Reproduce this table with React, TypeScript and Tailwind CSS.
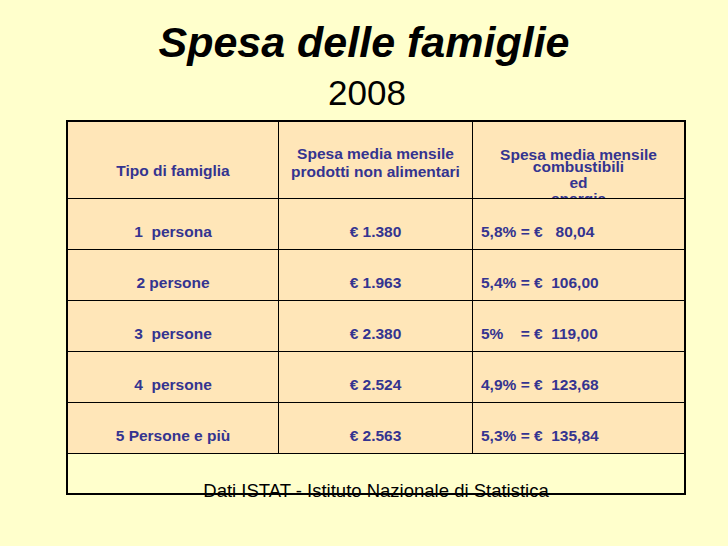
import React from "react";

// ── Data ───────────────────────────────────────────────────

const rows: { tipo: string; spesa: string; energia: string }[] = [
  { tipo: "1  persona", spesa: "€ 1.380", energia: "5,8% = €   80,04" },
  { tipo: "2 persone", spesa: "€ 1.963", energia: "5,4% = €  106,00" },
  { tipo: "3  persone", spesa: "€ 2.380", energia: "5%    = €  119,00" },
  { tipo: "4  persone", spesa: "€ 2.524", energia: "4,9% = €  123,68" },
  { tipo: "5 Persone e più", spesa: "€ 2.563", energia: "5,3% = €  135,84" },
];

// ── Table ──────────────────────────────────────────────────

function HeaderRow() {
  return (
    <div className="grid h-[77px] grid-cols-[211px_194px_1fr] border-b border-black bg-[#FFE6B8] text-[15.5px] font-bold text-[#343490]">
      <div className="border-r border-black pt-[40px] text-center leading-[18px]">
        Tipo di famiglia
      </div>
      <div className="border-r border-black pt-[23px] text-center leading-[18px]">
        <div>Spesa media mensile</div>
        <div>prodotti non alimentari</div>
      </div>
      <div className="overflow-hidden pt-[24px] text-center">
        <div className="leading-[18px]">Spesa media mensile</div>
        <div className="-mt-[5px] leading-[16px]">
          <div>combustibili</div>
          <div>ed</div>
          <div>energia</div>
        </div>
      </div>
    </div>
  );
}

function DataRow({ tipo, spesa, energia }: { tipo: string; spesa: string; energia: string }) {
  return (
    <div className="grid h-[51px] grid-cols-[211px_194px_1fr] border-b border-black bg-[#FFE6B8] text-[15.5px] font-bold leading-[17px] text-[#343490]">
      <div className="whitespace-pre border-r border-black pt-[24px] text-center">{tipo}</div>
      <div className="whitespace-pre border-r border-black pt-[24px] text-center">{spesa}</div>
      <div className="whitespace-pre pl-[8px] pt-[24px]">{energia}</div>
    </div>
  );
}

// ── Page ───────────────────────────────────────────────────

export default function App() {
  return (
    <div className="flex h-[546px] w-[728px] flex-col bg-[#FFFFCC] font-['Liberation_Sans',Arial,sans-serif] text-black">
      <h1 className="mt-[22px] text-center text-[43px] font-bold italic leading-[40px]">
        Spesa delle famiglie
      </h1>
      <div className="ml-[6px] mt-[13px] text-center text-[35px] leading-[36px]">2008</div>

      <div className="ml-[66px] mt-[9px] w-[620px] border-2 border-black">
        <HeaderRow />
        {rows.map((r) => (
          <DataRow key={r.tipo} {...r} />
        ))}
        <div className="h-[39px]" />
      </div>
      <div className="relative ml-[66px] -mt-[14px] w-[620px] text-center text-[18.5px] leading-[20px]">
        Dati ISTAT - Istituto Nazionale di Statistica
      </div>
    </div>
  );
}
